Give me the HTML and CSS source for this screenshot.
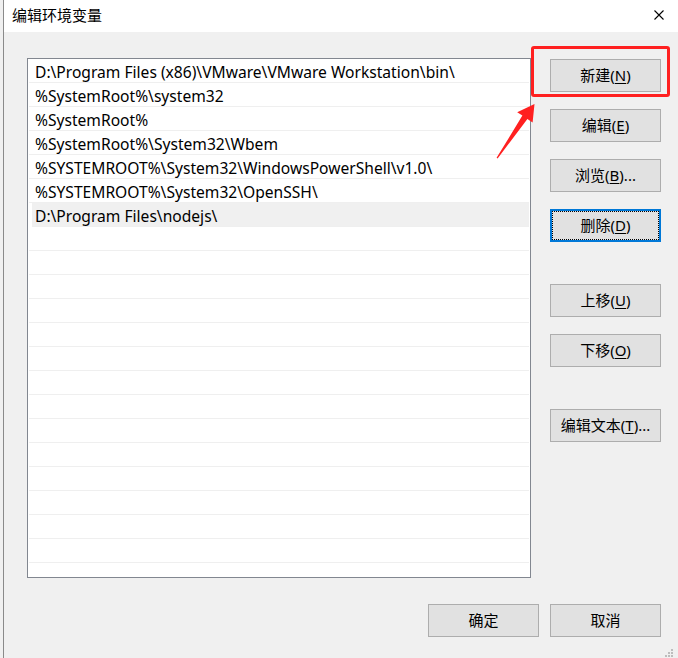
FILE: index.html
```html
<!DOCTYPE html>
<html lang="zh-CN">
<head>
<meta charset="utf-8">
<title>编辑环境变量</title>
<link rel="stylesheet" href="styles.css">
</head>
<body>
<div class="window">
  <div class="titlebar">
    <span class="title">编辑环境变量</span>
    <svg class="close" width="10" height="10" viewBox="0 0 10 10"><path d="M0.5 0.5 L9.5 9.5 M9.5 0.5 L0.5 9.5" stroke="#000" stroke-width="1.1" fill="none"/></svg>
  </div>
  <div class="client">
    <div class="main">
      <div class="list">
        <div class="row">D:\Program Files (x86)\VMware\VMware Workstation\bin\</div>
        <div class="row">%SystemRoot%\system32</div>
        <div class="row">%SystemRoot%</div>
        <div class="row">%SystemRoot%\System32\Wbem</div>
        <div class="row">%SYSTEMROOT%\System32\WindowsPowerShell\v1.0\</div>
        <div class="row">%SYSTEMROOT%\System32\OpenSSH\</div>
        <div class="row sel">D:\Program Files\nodejs\</div>
        <div class="row"></div>
        <div class="row"></div>
        <div class="row"></div>
        <div class="row"></div>
        <div class="row"></div>
        <div class="row"></div>
        <div class="row"></div>
        <div class="row"></div>
        <div class="row"></div>
        <div class="row"></div>
        <div class="row"></div>
        <div class="row"></div>
        <div class="row"></div>
        <div class="row"></div>
        <div class="row"></div>
      </div>
      <div class="side">
        <button class="btn">新建(<u>N</u>)</button>
        <button class="btn">编辑(<u>E</u>)</button>
        <button class="btn">浏览(<u>B</u>)...</button>
        <button class="btn focus">删除(<u>D</u>)</button>
        <button class="btn far">上移(<u>U</u>)</button>
        <button class="btn">下移(<u>O</u>)</button>
        <button class="btn far">编辑文本(<u>T</u>)...</button>
      </div>
    </div>
    <div class="footer">
      <button class="btn">确定</button>
      <button class="btn">取消</button>
    </div>
    <svg class="grip" width="8" height="8" viewBox="0 0 8 8">
      <rect x="6" y="0" width="2" height="2" fill="#bdbdbd"/>
      <rect x="3" y="3" width="2" height="2" fill="#bdbdbd"/>
      <rect x="6" y="3" width="2" height="2" fill="#bdbdbd"/>
      <rect x="0" y="6" width="2" height="2" fill="#bdbdbd"/>
      <rect x="3" y="6" width="2" height="2" fill="#bdbdbd"/>
      <rect x="6" y="6" width="2" height="2" fill="#bdbdbd"/>
    </svg>
  </div>
</div>
<div class="annot-box"></div>
<svg class="annot-arrow" width="678" height="658" viewBox="0 0 678 658">
  <polygon points="496.6,157.8 522.4,115.6 517.2,112.2 534.5,104 532.6,122.5 527.4,118.9 497.6,158.6" fill="#ff2020"/>
</svg>
</body>
</html>
```

FILE: styles.css
```css
html, body {
  margin: 0;
  padding: 0;
}
body {
  width: 678px;
  height: 658px;
  overflow: hidden;
  background: #f0f0f0;
  font-family: "Noto Sans", "Noto Sans CJK SC", sans-serif;
  color: #000;
  position: relative;
}
.window {
  margin-left: 3px;
  border-left: 1px solid #8a8a8a;
  height: 658px;
  display: flex;
  flex-direction: column;
}
.titlebar {
  height: 32px;
  background: #fff;
  display: flex;
  align-items: center;
  justify-content: space-between;
  padding: 0 14px 2px 8px;
  box-sizing: border-box;
}
.title {
  font-size: 15px;
  line-height: 20px;
}
.close {
  display: block;
}
.client {
  flex: 1;
  position: relative;
  padding: 26px 17px 0 23px;
}
.main {
  display: flex;
  gap: 19px;
}
.list {
  width: 504px;
  height: 520px;
  box-sizing: border-box;
  border: 1px solid #828790;
  background: #fff;
  overflow: hidden;
}
.row {
  height: 24px;
  box-sizing: border-box;
  margin: 0 1px;
  padding: 3px 0 0 6px;
  border-bottom: 1px solid #efefef;
  font-size: 15.6px;
  line-height: 20px;
  white-space: nowrap;
}
.row.sel {
  margin-left: 4px;
  padding-left: 3px;
  background: #f0f0f0;
}
.side {
  width: 111px;
  padding-top: 1px;
  display: flex;
  flex-direction: column;
  gap: 17px;
}
.btn {
  width: 111px;
  height: 33px;
  box-sizing: border-box;
  margin: 0;
  padding: 0;
  border: 1px solid #adadad;
  border-radius: 0;
  background: #e1e1e1;
  font-family: "Noto Sans", "Noto Sans CJK SC", sans-serif;
  font-size: 15px;
  line-height: 31px;
  color: #000;
  text-align: center;
}
.btn u {
  text-decoration-thickness: 1px;
  text-underline-offset: 2px;
}
.btn.focus {
  border: 2px solid #0078d7;
  outline: 1px dotted #000;
  outline-offset: -3px;
  line-height: 29px;
}
.btn.far {
  margin-top: 25px;
}
.footer {
  margin-top: 26px;
  display: flex;
  justify-content: flex-end;
  gap: 11px;
}
.grip {
  position: absolute;
  right: 5px;
  bottom: 1px;
}
.annot-box {
  position: absolute;
  left: 531px;
  top: 46px;
  width: 139px;
  height: 51px;
  box-sizing: border-box;
  border: 3px solid #ff2020;
  border-radius: 3px;
}
.annot-arrow {
  position: absolute;
  left: 0;
  top: 0;
  pointer-events: none;
}
```
